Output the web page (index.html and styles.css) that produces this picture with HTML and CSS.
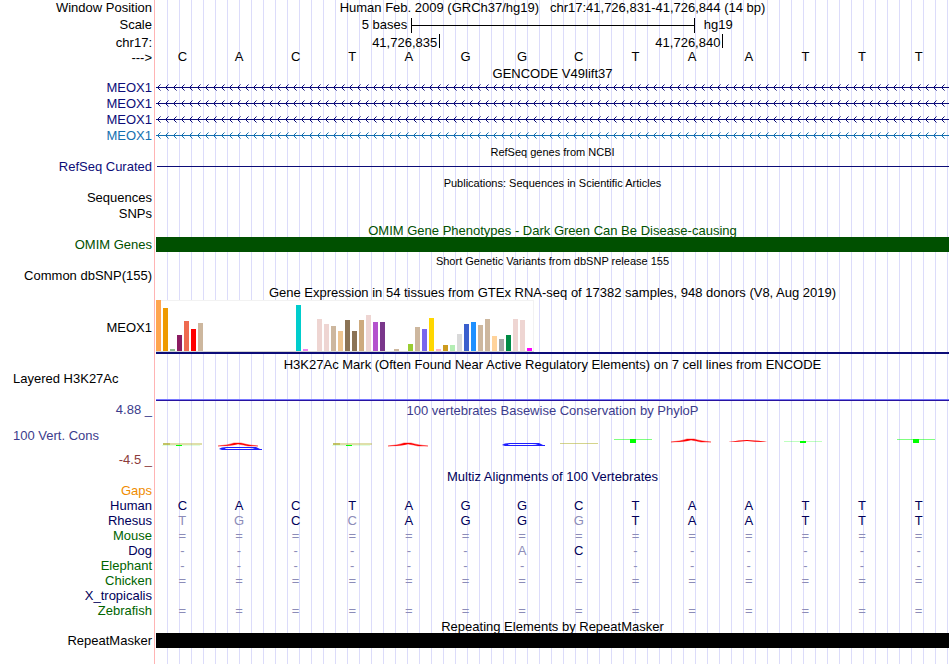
FILE: index.html
```html
<!DOCTYPE html>
<html lang="en">
<head>
<meta charset="utf-8">
<title>chr17:41,726,831-41,726,844</title>
<link rel="stylesheet" href="styles.css">
</head>
<body>
<main class="browser">
  <svg class="defs" aria-hidden="true">
    <defs>
      <pattern id="strand" width="8" height="16" patternUnits="userSpaceOnUse">
        <path d="M0 8h8v1H0zM2 7h1v1H2zM2 9h1v1H2zM3 6h1v1H3zM3 10h1v1H3z" fill="#0c0c78"/>
        <path d="M4 5h1v1H4zM4 11h1v1H4z" fill="#0c0c78" opacity=".55"/>
      </pattern>
      <pattern id="strand-blue" width="8" height="16" patternUnits="userSpaceOnUse">
        <path d="M0 8h8v1H0zM2 7h1v1H2zM2 9h1v1H2zM3 6h1v1H3zM3 10h1v1H3z" fill="#1470b0"/>
        <path d="M4 5h1v1H4zM4 11h1v1H4z" fill="#1470b0" opacity=".55"/>
      </pattern>
    </defs>
  </svg>

  <section class="track ruler">
    <div class="row"><span class="label">Window Position</span><h1 class="heading">Human Feb. 2009 (GRCh37/hg19)&nbsp;&nbsp; chr17:41,726,831-41,726,844 (14 bp)</h1></div>
    <div class="row tall"><span class="label">Scale</span><div class="scale"><span class="scale-text">5 bases</span><span class="scale-bar"></span><span>hg19</span></div></div>
    <div class="row low"><span class="label">chr17:</span><div class="ticks"><span class="tick">41,726,835</span><span class="tick">41,726,840</span></div></div>
    <div class="row short"><span class="label">---&gt;</span><div class="bases"><span>C</span><span>A</span><span>C</span><span>T</span><span>A</span><span>G</span><span>G</span><span>C</span><span>T</span><span>A</span><span>A</span><span>T</span><span>T</span><span>T</span></div></div>
  </section>

  <section class="track">
    <h2 class="title">GENCODE V49lift37</h2>
    <div class="row low navy"><span class="label">MEOX1</span><svg class="gene"><rect width="100%" height="16" fill="url(#strand)"/></svg></div>
    <div class="row low navy"><span class="label">MEOX1</span><svg class="gene"><rect width="100%" height="16" fill="url(#strand)"/></svg></div>
    <div class="row low navy"><span class="label">MEOX1</span><svg class="gene"><rect width="100%" height="16" fill="url(#strand)"/></svg></div>
    <div class="row low blue"><span class="label">MEOX1</span><svg class="gene"><rect width="100%" height="16" fill="url(#strand-blue)"/></svg></div>
  </section>

  <section class="track">
    <h2 class="title small">RefSeq genes from NCBI</h2>
    <div class="row short navy"><span class="label">RefSeq Curated</span><span class="intron"></span></div>
  </section>

  <section class="track">
    <h2 class="title small">Publications: Sequences in Scientific Articles</h2>
    <div class="row"><span class="label">Sequences</span></div>
    <div class="row"><span class="label">SNPs</span></div>
  </section>

  <section class="track omim">
    <h2 class="title">OMIM Gene Phenotypes - Dark Green Can Be Disease-causing</h2>
    <div class="row short"><span class="label">OMIM Genes</span><span class="block"></span></div>
  </section>

  <section class="track">
    <h2 class="title small">Short Genetic Variants from dbSNP release 155</h2>
    <div class="row"><span class="label">Common dbSNP(155)</span></div>
  </section>

  <section class="track gtex">
    <h2 class="title">Gene Expression in 54 tissues from GTEx RNA-seq of 17382 samples, 948 donors (V8, Aug 2019)</h2>
    <div class="row chart-row"><span class="label">MEOX1</span>
      <div class="chart">
        <svg width="378" height="52" shape-rendering="crispEdges" role="img" aria-label="MEOX1 expression by tissue">
          <rect width="378" height="52" fill="#fff"/>
          <path d="M0 0h378v1H0zM377 0h1v52h-1z" fill="#f2f2f2"/>
          <path d="M0 51h378v1H0z" fill="#d3d3d3"/>
          <rect x="0" y="0" width="5" height="51" fill="#ffa54f"/>
          <rect x="7" y="8" width="5" height="43" fill="#ee9a00"/>
          <rect x="14" y="49" width="5" height="2" fill="#8fbc8f"/>
          <rect x="21" y="35" width="5" height="16" fill="#8b1c62"/>
          <rect x="28" y="21" width="5" height="30" fill="#ee6a50"/>
          <rect x="35" y="29" width="5" height="22" fill="#ff0000"/>
          <rect x="42" y="23" width="5" height="28" fill="#cdb79e"/>
          <rect x="140" y="5" width="5" height="46" fill="#00cdcd"/>
          <rect x="147" y="49" width="5" height="2" fill="#ee82ee"/>
          <rect x="161" y="19" width="5" height="32" fill="#eed5d2"/>
          <rect x="168" y="24" width="5" height="27" fill="#eed5d2"/>
          <rect x="175" y="26" width="5" height="25" fill="#cdb79e"/>
          <rect x="182" y="31" width="5" height="20" fill="#eec591"/>
          <rect x="189" y="20" width="5" height="31" fill="#8b7355"/>
          <rect x="196" y="31" width="5" height="20" fill="#8b7355"/>
          <rect x="203" y="20" width="5" height="31" fill="#cdaa7d"/>
          <rect x="210" y="15" width="5" height="36" fill="#eed5d2"/>
          <rect x="217" y="22" width="5" height="29" fill="#b452cd"/>
          <rect x="224" y="22" width="5" height="29" fill="#7a378b"/>
          <rect x="238" y="49" width="5" height="2" fill="#cdb79e"/>
          <rect x="252" y="44" width="5" height="7" fill="#9acd32"/>
          <rect x="259" y="27" width="5" height="24" fill="#cdb79e"/>
          <rect x="266" y="29" width="5" height="22" fill="#7a67ee"/>
          <rect x="273" y="18" width="5" height="33" fill="#ffd700"/>
          <rect x="280" y="49" width="5" height="2" fill="#ffb6c1"/>
          <rect x="287" y="45" width="5" height="6" fill="#cd9b1d"/>
          <rect x="294" y="45" width="5" height="6" fill="#b4eeb4"/>
          <rect x="301" y="34" width="5" height="17" fill="#d9d9d9"/>
          <rect x="308" y="24" width="5" height="27" fill="#3a5fcd"/>
          <rect x="315" y="22" width="5" height="29" fill="#1e90ff"/>
          <rect x="322" y="25" width="5" height="26" fill="#cdb79e"/>
          <rect x="329" y="19" width="5" height="32" fill="#cdb79e"/>
          <rect x="336" y="36" width="5" height="15" fill="#ffd39b"/>
          <rect x="343" y="39" width="5" height="12" fill="#a6a6a6"/>
          <rect x="350" y="35" width="5" height="16" fill="#008b45"/>
          <rect x="357" y="19" width="5" height="32" fill="#eed5d2"/>
          <rect x="364" y="20" width="5" height="31" fill="#eed5d2"/>
          <rect x="371" y="48" width="5" height="3" fill="#ff00ff"/>
        </svg>
      </div>
    </div>
  </section>

  <section class="track h3k">
    <h2 class="title">H3K27Ac Mark (Often Found Near Active Regulatory Elements) on 7 cell lines from ENCODE</h2>
    <div class="row signal"><span class="label left">Layered H3K27Ac</span></div>
  </section>

  <section class="track cons">
    <div class="row cons-row">
      <div class="axis"><span class="top">4.88 _</span><span class="left">100 Vert. Cons</span><span class="bottom">-4.5 _</span></div>
      <div>
        <h2 class="plain-title">100 vertebrates Basewise Conservation by PhyloP</h2>
        <svg class="logo" viewBox="0 0 793 20" preserveAspectRatio="none" role="img" aria-label="Conservation scores by base">
          <defs>
            <g id="c-mark"><path d="M7 9h39v2H7z" fill="#b8b840" opacity=".45"/><path d="M7 9h7v2H7z" fill="#a8a820" opacity=".5"/><path d="M6 11h38v1H6z" fill="#00ff00" opacity=".12"/><path d="M20 11h6v1h-6z" fill="#00ff00"/></g>
            <path id="a-mark" d="M0 3Q11 2 16 0h7Q29 2 40 3L30 3Q26 2 20 1Q13 3 0 3Z" fill="#f00" stroke="#f00" stroke-width=".4"/>
            <path id="c-blue" d="M0 2Q2 0 8 0h29l4 2H36Q34 1 30 1H8Q5 2 6 2h37v1H3z" fill="#2020ff"/>
            <path id="t-mark" d="M0 0h38v1H0z" fill="#00ff00" opacity=".5"/>
          </defs>
          <use href="#c-mark"/>
          <use href="#a-mark" x="62" y="9"/>
          <use href="#c-blue" x="63" y="13"/>
          <use href="#c-mark" x="170"/>
          <use href="#a-mark" x="232" y="9"/>
          <use href="#c-blue" x="346" y="9"/>
          <path d="M404 9h38v1h-38z" fill="#b8b840" opacity=".6"/>
          <use href="#t-mark" x="458" y="5"/><path d="M474 5h6v4h-6z" fill="#0f0"/>
          <use href="#a-mark" x="515" y="5"/>
          <path d="M572 8q12-2 19-2t20 2q-12 0-20-1-8 1-19 1z" fill="#f00"/>
          <g opacity=".5"><use href="#t-mark" x="628" y="7"/></g><path d="M644 7h6v2h-6z" fill="#0f0"/>
          <use href="#t-mark" x="741" y="5"/><path d="M757 5h6v4h-6z" fill="#0f0"/>
        </svg>
      </div>
    </div>
  </section>

  <section class="track multiz">
    <h2 class="title">Multiz Alignments of 100 Vertebrates</h2>
    <div class="row short"><span class="label orange">Gaps</span></div>
    <div class="row short"><span class="label">Human</span><div class="bases"><span>C</span><span>A</span><span>C</span><span>T</span><span>A</span><span>G</span><span>G</span><span>C</span><span>T</span><span>A</span><span>A</span><span>T</span><span>T</span><span>T</span></div></div>
    <div class="row short"><span class="label">Rhesus</span><div class="bases"><i>T</i><i>G</i><span>C</span><i>C</i><span>A</span><span>G</span><span>G</span><i>G</i><span>T</span><span>A</span><span>A</span><span>T</span><span>T</span><span>T</span></div></div>
    <div class="row short"><span class="label green">Mouse</span><div class="bases"><i>=</i><i>=</i><i>=</i><i>=</i><i>=</i><i>=</i><i>=</i><i>=</i><i>=</i><i>=</i><i>=</i><i>=</i><i>=</i><i>=</i></div></div>
    <div class="row short"><span class="label">Dog</span><div class="bases"><i>-</i><i>-</i><i>-</i><i>-</i><i>-</i><i>-</i><i>A</i><span>C</span><i>-</i><i>-</i><i>-</i><i>-</i><i>-</i><i>-</i></div></div>
    <div class="row short"><span class="label green">Elephant</span><div class="bases"><i>-</i><i>-</i><i>-</i><i>-</i><i>-</i><i>-</i><i>-</i><i>-</i><i>-</i><i>-</i><i>-</i><i>-</i><i>-</i><i>-</i></div></div>
    <div class="row short"><span class="label green">Chicken</span><div class="bases"><i>=</i><i>=</i><i>=</i><i>=</i><i>=</i><i>=</i><i>=</i><i>=</i><i>=</i><i>=</i><i>=</i><i>=</i><i>=</i><i>=</i></div></div>
    <div class="row short"><span class="label">X_tropicalis</span></div>
    <div class="row short"><span class="label green">Zebrafish</span><div class="bases"><i>=</i><i>=</i><i>=</i><i>=</i><i>=</i><i>=</i><i>=</i><i>=</i><i>=</i><i>=</i><i>=</i><i>=</i><i>=</i><i>=</i></div></div>
  </section>

  <section class="track repeats">
    <h2 class="title">Repeating Elements by RepeatMasker</h2>
    <div class="row short"><span class="label">RepeatMasker</span><span class="block"></span></div>
  </section>
</main>
</body>
</html>
```
FILE: styles.css
```css
body {
  margin: 0;
  background: #fff;
  color: #000;
  font: 13px/15px "Liberation Sans", Arial, sans-serif;
}

/* Pink divider and vertical guide lines run behind every track. */
.browser {
  margin-right: 1px;
  padding-bottom: 16px;
  background:
    linear-gradient(#ffb4b4, #ffb4b4) 154px 0 / 1px 100% no-repeat,
    linear-gradient(#fff, #fff) 0 0 / 160px 100% no-repeat,
    repeating-linear-gradient(90deg, transparent 0 11px, #dcdcfa 11px 12px);
}

.defs {
  position: absolute;
  width: 0;
  height: 0;
}

h1,
h2 {
  margin: 0;
  font: inherit;
  text-align: center;
  white-space: nowrap;
}

.row {
  display: grid;
  grid-template-columns: 152px minmax(0, 1fr);
  column-gap: 4px;
  height: 16px;
  line-height: 16px;
}

.low {
  line-height: 18px;
}

.tall {
  height: 18px;
  line-height: 18px;
}

.short {
  height: 15px;
  line-height: 15px;
}

.label {
  text-align: right;
  white-space: nowrap;
}

.left {
  padding-left: 13px;
  text-align: left;
}

.title {
  height: 14px;
  margin-left: 156px;
  line-height: 18px;
}

.small {
  height: 16px;
  font-size: 11px;
  line-height: 19px;
}

.navy { color: #0c0c78; }
.blue { color: #1470b0; }
.label.green { color: #006400; }
.label.orange { color: #f08c00; }

.scale {
  display: grid;
  grid-template-columns: 32fr 36fr 32fr;
  column-gap: 4px;
}

.scale-text {
  text-align: right;
}

.scale-bar {
  align-self: center;
  height: 15px;
  margin-right: -1px;
  border: solid #000;
  border-width: 0 1px;
  background: linear-gradient(#000, #000) 0 50% / 100% 1px no-repeat;
}

.scale span:last-child {
  padding-left: 6px;
}

.ticks {
  display: grid;
  grid-template-columns: 5fr 5fr 4fr;
}

.tick {
  height: 14px;
  margin-right: -1px;
  padding-right: 2px;
  border-right: 1px solid #000;
  text-align: right;
}

.bases {
  display: grid;
  grid-template-columns: repeat(14, 1fr);
  text-align: center;
}

.bases > * {
  padding-right: 4px;
}

.bases i {
  color: #8c8cb8;
  font-style: normal;
}

.ruler .bases {
  line-height: 13px;
}

.gene {
  display: block;
  width: 100%;
  height: 16px;
}

.intron {
  align-self: center;
  height: 1px;
  margin-left: 1px;
  background: #0c0c78;
}

.omim {
  padding-top: 1px;
  color: #005000;
}

.block {
  background: currentColor;
}

.gtex {
  padding-top: 1px;
}

.omim .title,
.gtex .title,
.repeats .title {
  line-height: 16px;
}

.chart-row {
  height: 54px;
  margin-top: 1px;
  line-height: 56px;
}

.chart {
  align-self: start;
  border-bottom: 2px solid #0c0c78;
}

.chart svg {
  display: block;
}

.h3k {
  padding-top: 2px;
}

.signal {
  height: 31px;
  line-height: 17px;
  background: linear-gradient(#7878ff 50%, #2814a0 50%) 156px 100% / 100% 2px no-repeat;
}

.cons {
  color: #3c3c8c;
}

.cons-row {
  height: 67px;
}

.axis {
  display: grid;
  grid-template-rows: 18px 1fr 16px;
  align-items: center;
  text-align: right;
}

.bottom {
  color: #8c3c3c;
}

.plain-title {
  line-height: 20px;
}

.logo {
  display: block;
  width: 100%;
  height: 20px;
  margin-top: 13px;
}

.multiz {
  color: #00005a;
}

.multiz .title {
  height: 15px;
}

.repeats {
  padding-top: 1px;
}
```
